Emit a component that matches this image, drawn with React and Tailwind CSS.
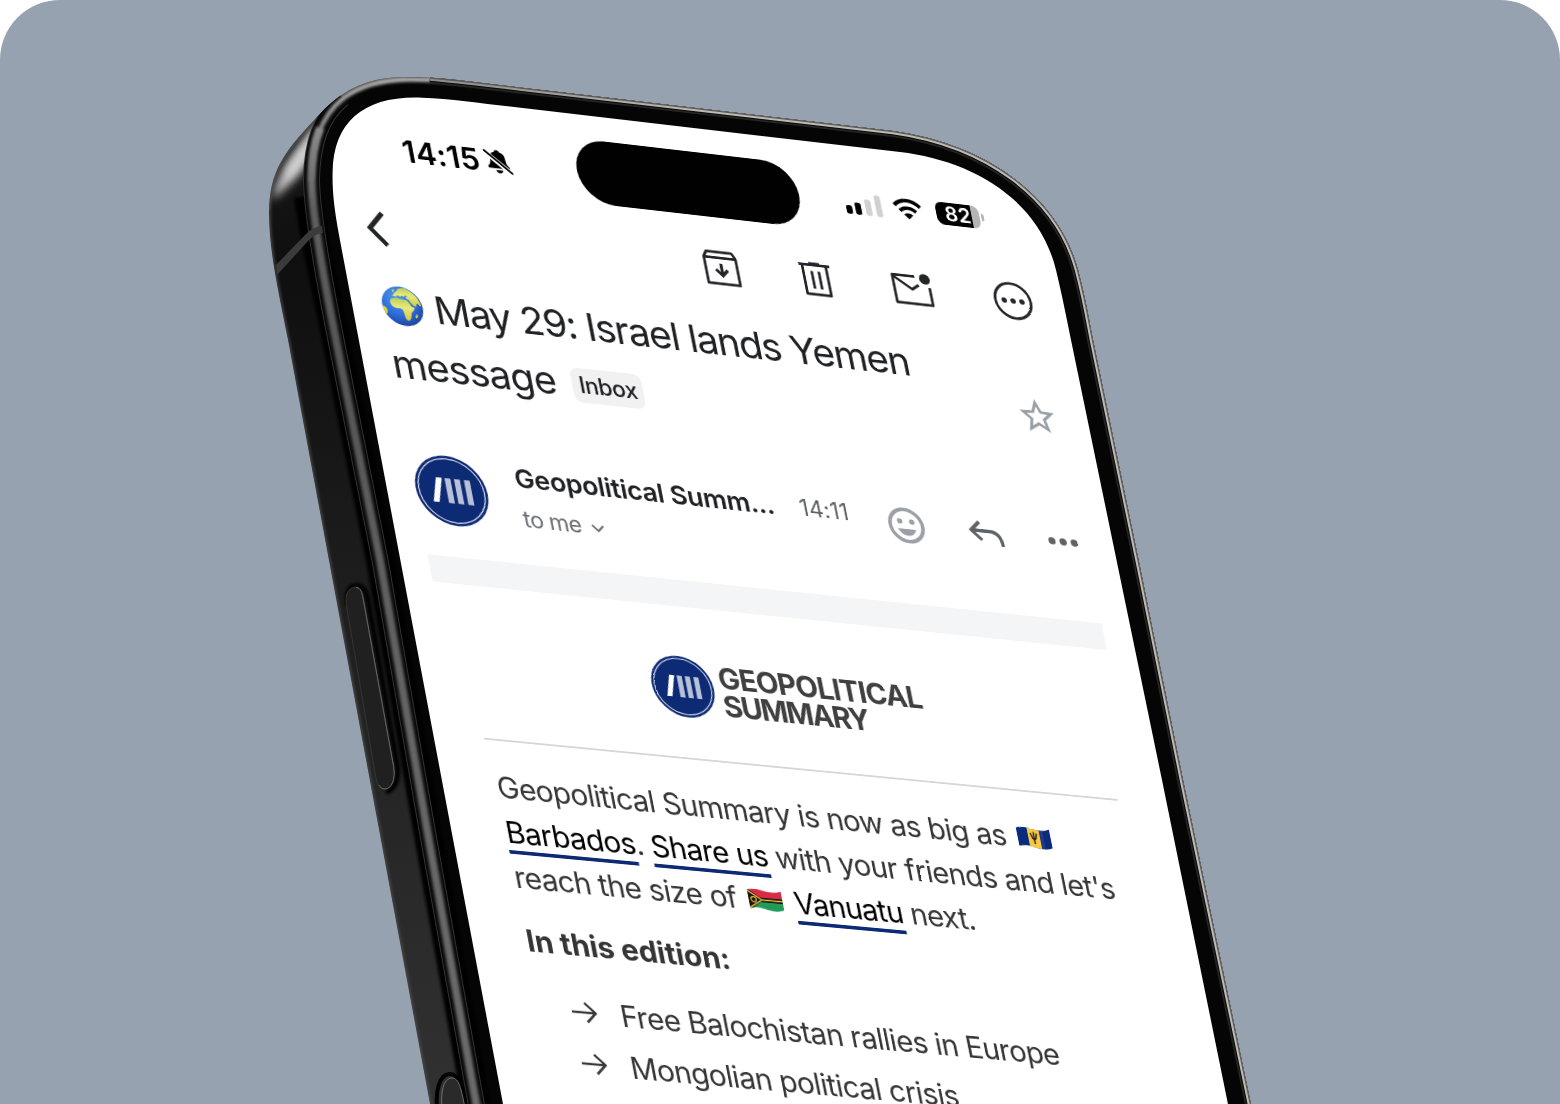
import React from "react";

function PhoneBody() {
  const outline =
    "M405 77 C440 76 480 83 520 87.5 L893 131 C985 144 1058 195 1078 270 C1086 300 1090 325 1093 340 L1140 567 L1183 780 L1253 1114 L432 1114 L430 1104 L288 340 C278 290 269 250 269 213 C269 170 285 150 322 111.7 C345 88 370 77 405 77 Z";
  const outerEdge =
    "M430 77.500 C460 80 490 84 520 87.5 L893 131 C985 144 1058 195 1078 270 C1086 300 1090 325 1093 340 L1140 567 L1183 780 L1253 1114";
  const rim =
    "M520 89.5 C470 83 440 79 408 79.500 C380 80 358 87 343 98.500 C320 117 312 145 311.500 180 C312 215 324 280 336 340 L380 560 L428 835 L478 1114";
  const screen =
    "M505 1114 L503 1104 L339 235 C334 208 332.200 190 332.600 172 C333.500 120 366 95.500 422 97.700 C450 98.800 480 103 510 106.600 L900 152 C968 160 1038 196 1056 270 C1062 295 1066 315 1071 340 L1162 780 L1230 1114 Z";
  return (
    <svg viewBox="0 0 1560 1104" className="absolute inset-0 h-full w-full" aria-hidden="true">
      <defs>
        <clipPath id="body">
          <path d={outline} />
        </clipPath>
        <linearGradient id="side" x1="0" y1="77" x2="0" y2="1104" gradientUnits="userSpaceOnUse">
          <stop offset="0" stopColor="#1c1c1c" />
          <stop offset="0.18" stopColor="#0f0f0f" />
          <stop offset="0.3" stopColor="#141414" />
          <stop offset="0.6" stopColor="#222" />
          <stop offset="1" stopColor="#313131" />
        </linearGradient>
        <linearGradient id="rimTone" x1="0" y1="77" x2="0" y2="1104" gradientUnits="userSpaceOnUse">
          <stop offset="0" stopColor="#b5b5b3" />
          <stop offset="0.05" stopColor="#8b8b8b" />
          <stop offset="0.13" stopColor="#5e5e5e" />
          <stop offset="0.3" stopColor="#565656" />
          <stop offset="0.6" stopColor="#646464" />
          <stop offset="1" stopColor="#6b6b6b" />
        </linearGradient>
        <linearGradient id="edgeTone" x1="430" y1="0" x2="700" y2="0" gradientUnits="userSpaceOnUse">
          <stop offset="0" stopColor="#8d8c8a" />
          <stop offset="1" stopColor="#bdb9b4" />
        </linearGradient>
        <filter id="b1" x="-20%" y="-20%" width="140%" height="140%">
          <feGaussianBlur stdDeviation="1.500" />
        </filter>
        <filter id="b5" x="-50%" y="-50%" width="200%" height="200%">
          <feGaussianBlur stdDeviation="5" />
        </filter>
      </defs>
      <g clipPath="url(#body)" fill="none">
        <path d={outline} fill="url(#side)" />
        <path d="M272 200 C278 168 302 146 326 112 L318 142 C310 164 300 176 272 200 Z" fill="#d0d0d0" filter="url(#b5)" />
        <path d="M288 174 C296 158 308 146 316 130" stroke="#d8d8d8" strokeWidth="6" filter="url(#b5)" />
        <path d="M269 213 C269 170 285 150 322 111.700 C345 88 370 77 405 77" stroke="#555" strokeWidth="3" filter="url(#b1)" />
        <path d="M269 213 C269 250 278 290 288 340 L430 1104" stroke="#4b4b4a" strokeWidth="3" filter="url(#b1)" />
        <path d={rim + " L1300 1114 L1300 84 Z"} fill="#050505" />
        <path d="M308 196 C312 230 324 280 336 340 L380 560 L428 835 L478 1114" stroke="#000" strokeWidth="28" filter="url(#b1)" />
        <path d="M343 98.500 C320 117 312 145 311.500 180 C312 215 324 280 336 340 L380 560 L428 835 L478 1114" stroke="#33322f" strokeWidth="17" />
        <path d="M343 98.500 C320 117 312 145 311.500 180 C312 215 324 280 336 340 L380 560 L428 835 L478 1114" stroke="#080808" strokeWidth="15" />
        <path d="M520 89.500 C470 83 440 79 408 79.500 C380 80 358 87 343 98.500 C320 117 312 145 311.500 180" stroke="url(#rimTone)" strokeWidth="4.500" filter="url(#b1)" />
        <path d="M320 128 C313 145 311.500 165 311.500 180 C312 215 324 280 336 340 L380 560 L428 835 L478 1114" stroke="url(#rimTone)" strokeWidth="8" filter="url(#b1)" />
        <path d="M276 265 L305 235 Q312 227 322 226 L323 233 Q315 234 309 240 L277 275 Z" fill="#3b3b3b" />
        <path d={outerEdge} stroke="#242423" strokeWidth="12" />
        <path d={outerEdge} stroke="#0b0b0b" strokeWidth="8.500" />
        <path d={outerEdge} stroke="url(#edgeTone)" strokeWidth="6.500" />
        <path d={outerEdge} stroke="#5d5b59" strokeWidth="2.500" />
      </g>
      <path d={screen} fill="#fff" />
      <g fill="none">
        <path d="M348 606 C345 592 350 585 357 585.500 C365 586 367 594 368 600 L397 764 C400 780 394 790 386 792" stroke="#020202" strokeWidth="5" filter="url(#b1)" />
        <path d="M346.500 606 C344 592 350 587 356 587 C361 587 362 593 363 598 L393.500 766 C396 780 391 789 385 789 C378 789 377 782 376 778 Z" fill="#202020" stroke="#3a3a39" strokeWidth="0.800" />
        <path d="M356 587.500 C361 588 362 593 363 598 L393.500 766 C396 780 391 789 385 789 C382 789 380 787 379 785" stroke="#6b6b6a" strokeWidth="0.900" />
        <path d="M438 1114 C434 1090 440 1074 450 1074 C459 1074 462 1086 466 1108" stroke="#020202" strokeWidth="4" />
        <path d="M443 1114 C439 1092 444 1078 452 1078 C459 1078 461 1088 465 1108" fill="#2a2a2a" stroke="#777" strokeWidth="0.900" />
      </g>
    </svg>
  );
}

function LogoMark({ className }) {
  return (
    <svg viewBox="0 0 80 80" className={className} aria-hidden="true">
      <circle cx="40" cy="40" r="40" fill="#0d2a74" />
      <circle cx="40" cy="40" r="36.500" fill="none" stroke="#dfe3ee" strokeWidth="1.300" />
      <path d="M25 26 H31.500 L24 54 H17.500 Z" fill="#fff" />
      <path d="M34.500 26 H41 V54 H34.500 Z M45 26 H51.500 V54 H45 Z M56 26 H62.500 V54 H56 Z" fill="#b9c1d9" />
    </svg>
  );
}

function Globe() {
  return (
    <svg viewBox="0 0 46 46" className="size-[45px] shrink-0" aria-hidden="true">
      <defs>
        <radialGradient id="sea" cx="0.4" cy="0.3" r="0.75">
          <stop offset="0" stopColor="#4f9af0" />
          <stop offset="0.6" stopColor="#2c6ad6" />
          <stop offset="1" stopColor="#1d3f96" />
        </radialGradient>
        <linearGradient id="land" x1="0" y1="0" x2="0" y2="1">
          <stop offset="0" stopColor="#b9cf55" />
          <stop offset="0.4" stopColor="#e9e87c" />
          <stop offset="1" stopColor="#cfc93f" />
        </linearGradient>
        <clipPath id="disc">
          <circle cx="23" cy="23" r="22.500" />
        </clipPath>
      </defs>
      <g clipPath="url(#disc)">
        <rect width="46" height="46" fill="url(#sea)" />
        <path
          d="M10.500 17 C12 14.500 15.500 13.800 18.500 14 C22 14.500 26 15.500 29 15.500 C31 18 32 20.500 33.500 22.500 C35.500 22.800 36.500 23.200 36 24.500 C35 27 32 29 31.500 31 C31.500 34 30 37.500 27.500 39 C25.500 39.500 24.500 37.500 24 35 C23.500 32 23.500 30 22.500 27 C21 25.500 18 26 15 25.500 C11 24.500 9 21 10.500 17 Z"
          fill="url(#land)"
        />
        <path
          d="M14 12 C14 10.500 16.500 10 16 8.500 C18 7.500 18.500 6 20 5.500 C20 4 22 2.500 24 2.500 C28 1 32 3 35 5 C40 9 43 14 44 20 C43 22 41.500 19 40 18 C38.500 19 39 22.500 37.500 22 C35 21.500 32.500 18 31.500 15 C29.500 14 28 13.500 28.500 12 L31 10.500 L27.500 10.500 C26 13.500 25 11 23.500 11 C23 13.500 21 11 19.500 11 C18 12.500 16 13 14 12 Z"
          fill="url(#land)"
        />
        <path d="M36.500 31.500 C38.500 30 39 31 38 33.500 C37 36 35 35.500 35.500 33.500 Z" fill="#d8d24a" />
        <path d="M0 24 C3 24.500 6 27 5.500 30 C5 32 4 34 2 35 L0 33 Z" fill="#dcd340" />
        <path d="M14 5 C16 3.500 17.500 4.500 16.500 6.500 L14.500 8 Z" fill="#b9cf55" />
      </g>
    </svg>
  );
}

const flagWave = "M1 2.500 C8 0 13 1 20 2.500 C27 4 32 3.500 38 1.500 V22 C32 24.500 26 24.500 20 23 C13 21 8 20.500 1 22.500 Z";

function BarbadosFlag() {
  return (
    <svg viewBox="0 0 39 25" className="h-[25px] w-[39px]" aria-hidden="true">
      <clipPath id="fb"><path d={flagWave} /></clipPath>
      <g clipPath="url(#fb)">
        <rect width="39" height="25" fill="#0b2b7d" />
        <rect x="13" width="13" height="25" fill="#f9c741" />
        <path d="M16 7 C17.500 9 16.500 14 19.500 14 C22.500 14 21.500 9 23 7 M19.500 5.500 V19" fill="none" stroke="#231f15" strokeWidth="1.500" />
        <rect x="26" width="4" height="25" fill="#fff" opacity="0.08" />
      </g>
    </svg>
  );
}

function VanuatuFlag() {
  return (
    <svg viewBox="0 0 39 25" className="h-[25px] w-[39px]" aria-hidden="true">
      <clipPath id="fv"><path d={flagWave} /></clipPath>
      <g clipPath="url(#fv)">
        <rect width="39" height="12.500" fill="#d92b45" />
        <rect y="12.500" width="39" height="12.500" fill="#23995a" />
        <path d="M0 0 L17 12.500 L0 25 Z M12 10 H39 V15 H12 Z" fill="#17150f" />
        <path d="M0 2.500 L15.500 12.500 H39 M0 22.500 L15.500 12.500" fill="none" stroke="#efc443" strokeWidth="1.400" />
        <circle cx="6.500" cy="12.500" r="2.800" fill="none" stroke="#efc443" strokeWidth="1.200" />
      </g>
    </svg>
  );
}

function StatusBar() {
  return (
    <div className="flex h-[130px] items-center text-black">
      <div className="flex w-[279px] items-center pl-[88px]">
        <span className="mt-[2px] text-[34px] leading-[40px] font-semibold tracking-[0.1px]">14:15</span>
        <svg viewBox="0 0 32 32" className="ml-[5px] size-[31px]" aria-hidden="true">
          <path d="M16 2.500 C17.500 2.500 18.500 3.300 18.700 4.600 C22.500 5.600 24.500 8.500 24.500 12.500 C24.500 18 26 19.500 28 22 C28.500 23.500 28 24 27 24 H5 C4 24 3.500 23.500 4 22 C6 19.500 7.500 18 7.500 12.500 C7.500 8.500 9.500 5.600 13.300 4.600 C13.500 3.300 14.500 2.500 16 2.500 Z M12 26 H20 C19.500 28.500 18 29.500 16 29.500 C14 29.500 12.500 28.500 12 26 Z" fill="#000" />
          <path d="M1 4.500 L30 29" stroke="#fff" strokeWidth="5.500" />
          <path d="M2 4 L30 28.500" stroke="#000" strokeWidth="2.200" strokeLinecap="round" />
        </svg>
      </div>
      <div className="-mt-[2px] h-[73px] w-[246px] rounded-full bg-[#010101]" />
      <div className="flex w-[279px] items-center pl-[51px]">
        <svg viewBox="0 0 43 26" className="mt-[2px] h-[26px] w-[42px]" aria-hidden="true">
          <rect x="0" y="16" width="7" height="10" rx="2.200" />
          <rect x="10.500" y="12" width="7" height="14" rx="2.200" />
          <rect x="22.500" y="7" width="7" height="19" rx="2.200" fill="#d0d0d0" />
          <rect x="34.500" y="1" width="7" height="25" rx="2.200" fill="#d0d0d0" />
        </svg>
        <svg viewBox="0 0 34 25" className="mt-[1px] ml-[11px] h-[25px] w-[34px]" fill="none" stroke="#000" strokeWidth="4.200" aria-hidden="true">
          <path d="M2.500 9.500 C10.500 1 23.500 1 31.500 9.500" />
          <path d="M8 15.500 C13 10.500 21 10.500 26 15.500" />
          <path d="M17 24.500 L12 19.500 C15 16.700 19 16.700 22 19.500 Z" fill="#000" stroke="none" />
        </svg>
        <div className="mt-[2px] ml-[15px] flex h-[26px] w-[49px] items-center justify-center overflow-hidden rounded-[8px] bg-[linear-gradient(90deg,#000_82%,#b4b4b4_82%)]">
          <span className="mt-[1px] text-[23px] leading-none font-semibold tracking-[0.2px] text-white">82</span>
        </div>
        <div className="ml-[2px] h-[9px] w-[3px] rounded-r-full bg-[#b4b4b4]" />
      </div>
    </div>
  );
}

function Toolbar() {
  return (
    <div className="-mt-[1px] flex h-[61px] items-center pr-[36px] pb-[1px] pl-[32px] text-[#242528]">
      <svg viewBox="0 0 22 40" className="-mt-[3px] h-[40px] w-[22px]" fill="none" stroke="currentColor" strokeWidth="5" aria-hidden="true">
        <path d="M20 2 L4 20 L20 38" />
      </svg>
      <svg viewBox="0 0 44 44" className="ml-auto size-[44px]" fill="none" stroke="currentColor" strokeWidth="3" strokeLinejoin="round" aria-hidden="true">
        <path d="M4 10 L7.500 4 H35.500 L39 10 V40 H4 Z M4 10.500 H39" />
        <path d="M21.500 17 V30 M15 24 L21.500 30.500 L28 24" strokeWidth="3.400" strokeLinejoin="miter" />
      </svg>
      <svg viewBox="0 0 44 44" className="ml-[61px] size-[44px]" fill="none" stroke="currentColor" strokeWidth="3" strokeLinejoin="round" aria-hidden="true">
        <path d="M4.500 6.500 H39 M16 5 H28 M8.500 7 V40 H35 V7 M18 13.500 V33.500 M26 13.500 V33.500" />
      </svg>
      <svg viewBox="0 0 44 44" className="ml-[63px] size-[44px]" fill="none" stroke="currentColor" strokeWidth="3" strokeLinejoin="round" aria-hidden="true">
        <path d="M27 6.500 H2 V38 H42 V18" />
        <path d="M2.500 8 L22 21.500 L30 16" />
        <circle cx="38" cy="8.500" r="6" fill="currentColor" stroke="none" />
      </svg>
      <svg viewBox="0 0 44 44" className="ml-[69px] size-[44px]" fill="none" stroke="currentColor" strokeWidth="3" aria-hidden="true">
        <circle cx="22" cy="22" r="20" />
        <g fill="currentColor" stroke="none">
          <circle cx="12" cy="22" r="3" />
          <circle cx="22" cy="22" r="3" />
          <circle cx="32" cy="22" r="3" />
        </g>
      </svg>
    </div>
  );
}

function Subject() {
  return (
    <div className="mt-[21px] flex h-[129px] justify-between pr-[35px] pl-[33px] text-[#202124]">
      <h1 className="text-[43px] leading-[65.5px] tracking-[-1.4px] whitespace-nowrap">
        <span className="flex items-center">
          <Globe />
          <span className="ml-[12px]">May 29: Israel lands Yemen</span>
        </span>
        <span className="flex items-center">
          <span className="-ml-[1px] tracking-[-0.9px]">message</span>
          <span className="mt-[4px] ml-[18px] flex h-[39px] w-[78px] items-center justify-center rounded-[9px] bg-[#f1f1f2] text-[25px] leading-none font-medium tracking-[-0.5px]">
            Inbox
          </span>
        </span>
      </h1>
      <svg viewBox="0 0 44 44" className="mt-[57px] size-[44px]" fill="none" stroke="#9aa0a6" strokeWidth="3.200" aria-hidden="true">
        <path d="M22 6.500 L26.300 17 L37.500 17.900 L29 25.300 L31.600 36.300 L22 30.400 L12.400 36.300 L15 25.300 L6.500 17.900 L17.700 17 Z" />
      </svg>
    </div>
  );
}

function Sender() {
  return (
    <div className="mt-[60px] flex h-[121px] items-start pr-[35px] pl-[32px]">
      <LogoMark className="mt-[8px] size-[78px]" />
      <div className="ml-[33px]">
        <div className="flex h-[48px] items-center">
          <span className="w-[286px] text-[29px] leading-none font-semibold tracking-[-0.35px] whitespace-nowrap text-[#202124]">
            Geopolitical Summ...
          </span>
          <span className="ml-[26px] text-[25px] leading-none tracking-[0.1px] text-[#5f6368]">14:11</span>
        </div>
        <div className="mt-[7px] flex h-[30px] items-center pl-[1px] text-[25px] leading-none tracking-[-0.7px] text-[#6b6f74]">
          <span>to me</span>
          <svg viewBox="0 0 16 16" className="mt-[3px] ml-[10px] size-[16px]" fill="none" stroke="currentColor" strokeWidth="2.200" aria-hidden="true">
            <path d="M2 5 L8 11 L14 5" />
          </svg>
        </div>
      </div>
      <div className="ml-auto flex h-[64px] items-center">
        <svg viewBox="0 0 44 44" className="size-[44px]" aria-hidden="true">
          <circle cx="22" cy="22" r="18" fill="none" stroke="#9aa0a6" strokeWidth="4" />
          <circle cx="15.300" cy="17.500" r="3" fill="#9aa0a6" />
          <circle cx="28.700" cy="17.500" r="3" fill="#9aa0a6" />
          <path d="M12 26 H32 C30 31 26.500 33.500 22 33.500 C17.500 33.500 14 31 12 26 Z" fill="#9aa0a6" />
        </svg>
        <svg viewBox="0 0 44 44" className="ml-[45px] size-[44px]" fill="none" stroke="#5f6368" strokeWidth="3.800" aria-hidden="true">
          <path d="M16 9 L5.500 19 L16 29.500 M5.500 19 H26 C34 19 38.500 24 38.500 35" />
        </svg>
        <svg viewBox="0 0 44 44" className="ml-[42px] size-[44px]" fill="#5f6368" aria-hidden="true">
          <circle cx="9.500" cy="22" r="4" />
          <circle cx="22" cy="22" r="4" />
          <circle cx="34.500" cy="22" r="4" />
        </svg>
      </div>
    </div>
  );
}

function Link({ children }) {
  return (
    <a className="text-black underline decoration-[#0d2a74] decoration-[4px] underline-offset-[8px] [text-decoration-skip-ink:none]">
      {children}
    </a>
  );
}

function ListItem({ children }) {
  return (
    <li className="flex h-[56px] items-center">
      <svg viewBox="0 0 28 28" className="-mt-[3px] size-[28px]" fill="none" stroke="#383838" strokeWidth="2.500" aria-hidden="true">
        <path d="M1 14 H26 M16 3.500 L26.500 14 L16 24.500" />
      </svg>
      <span className="ml-[25px] tracking-[-0.66px]">{children}</span>
    </li>
  );
}

function Newsletter() {
  return (
    <div className="px-[55px] text-[#353535]">
      <div className="flex h-[169px] items-start pt-[56px] pl-[196px]">
        <LogoMark className="size-[68px]" />
        <div className="mt-[5px] ml-[7px] text-[32px] leading-[31px] font-bold text-[#404041]">
          <div className="tracking-[-1px]">GEOPOLITICAL</div>
          <div className="tracking-[-1.8px]">SUMMARY</div>
        </div>
      </div>
      <hr className="border-0 border-t-2 border-[#d6d6d6]" />
      <div className="mt-[27px] pl-[4px] text-[32px] tracking-[-0.72px] whitespace-nowrap">
        <p className="leading-[49px]">
          <span className="flex items-center">
            Geopolitical Summary is now as big as
            <span className="ml-[12px]">
              <BarbadosFlag />
            </span>
          </span>
          <span className="block tracking-[-0.69px]">
            <Link>Barbados</Link>. <Link>Share us</Link> with your friends and let's
          </span>
          <span className="flex items-center">
            reach the size of
            <span className="mr-[12px] ml-[12px]">
              <VanuatuFlag />
            </span>
            <Link>Vanuatu</Link>&nbsp;next.
          </span>
        </p>
        <p className="mt-[25px] leading-[40px] font-bold tracking-[-0.1px]">In this edition:</p>
        <ul className="mt-[26px] pl-[34px]">
          <ListItem>Free Balochistan rallies in Europe</ListItem>
          <ListItem>Mongolian political crisis</ListItem>
        </ul>
      </div>
    </div>
  );
}

export default function App() {
  return (
    <div className="h-[1104px] w-[1560px] overflow-hidden bg-white">
      <main className="relative h-full w-full overflow-hidden rounded-t-[60px] bg-[#97a2b0] font-['Inter',sans-serif]">
        <PhoneBody />
        <section className="absolute top-0 left-0 h-[1150px] w-[804px] origin-top-left [transform:matrix3d(0.933209,0.110572,0,0.00002918,0.161765,0.887567,0,-0.0000203,0,0,1,0,310,83,0,1)]">
          <StatusBar />
          <Toolbar />
          <Subject />
          <Sender />
          <div className="mr-[32px] ml-[31px] h-[30px] bg-[#f4f5f7]" />
          <Newsletter />
        </section>
      </main>
    </div>
  );
}
